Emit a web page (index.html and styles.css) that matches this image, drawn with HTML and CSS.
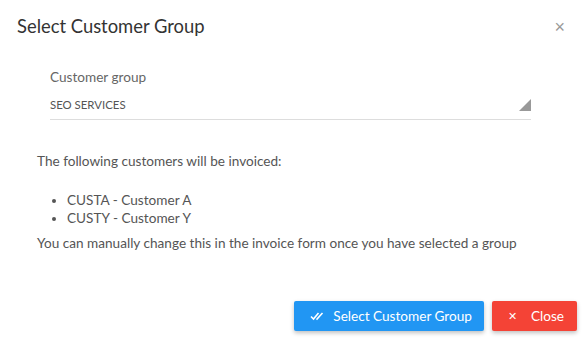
FILE: index.html
```html
<!DOCTYPE html>
<html lang="en">
<head>
    <meta charset="UTF-8">
    <title>Select Customer Group</title>
    <link rel="stylesheet" href="styles.css">
</head>
<body>
    <div class="dialog">
        <div class="dialog-header">
            <h1 class="dialog-title">Select Customer Group</h1>
            <button class="dialog-close" type="button">&times;</button>
        </div>
        <div class="dialog-body">
            <div class="field">
                <label class="field-label">Customer group</label>
                <div class="field-select">
                    <span>SEO SERVICES</span>
                    <span class="select-arrow"></span>
                </div>
            </div>
            <p class="info">The following customers will be invoiced:</p>
            <ul class="customer-list">
                <li>CUSTA - Customer A</li>
                <li>CUSTY - Customer Y</li>
            </ul>
            <p class="info note">You can manually change this in the invoice form once you have selected a group</p>
        </div>
        <div class="dialog-actions">
            <button class="btn btn-primary" type="button">
                <svg class="btn-icon" width="14" height="10" viewBox="0 0 14 10">
                    <path d="M1 5.5 L3.5 8 L8.5 2" fill="none" stroke="#fff" stroke-width="1.6"/>
                    <path d="M6.5 7.5 L7 8 L12.5 2" fill="none" stroke="#fff" stroke-width="1.6"/>
                </svg>
                Select Customer Group
            </button>
            <button class="btn btn-danger" type="button">
                <span class="btn-x">&#x2715;</span>
                Close
            </button>
        </div>
    </div>
</body>
</html>
```

FILE: styles.css
```css
body {
    margin: 0;
    background-color: #fff;
    font-family: Lato, "Open Sans", sans-serif;
    color: #555;
}
.dialog {
    width: 587px;
    height: 342px;
    display: flex;
    flex-direction: column;
}
.dialog-header {
    display: flex;
    justify-content: space-between;
    align-items: flex-start;
    padding: 14px 22px 0 17px;
}
.dialog-title {
    margin: 0;
    font-size: 18.4px;
    line-height: 24px;
    font-weight: 400;
    color: #333;
}
.dialog-close {
    border: none;
    background: none;
    padding: 0;
    margin-top: 6px;
    font-size: 18px;
    line-height: 14px;
    color: #999;
    font-weight: 300;
}
.dialog-body {
    padding: 0 56px 0 37px;
    font-size: 13.6px;
    line-height: 18px;
}
.field {
    margin: 30px 0 0 13px;
}
.field-label {
    display: block;
    color: #666;
}
.field-select {
    display: flex;
    justify-content: space-between;
    align-items: flex-end;
    height: 23px;
    margin-top: 4px;
    padding-bottom: 6px;
    border-bottom: 1px solid #ddd;
    font-size: 11.4px;
    line-height: 16px;
    color: #555;
}
.select-arrow {
    width: 0;
    height: 0;
    margin-bottom: 2px;
    border-left: 12px solid transparent;
    border-bottom: 12px solid #999;
}
.info {
    margin: 32px 0 0;
}
.customer-list {
    margin: 21px 0 0;
    padding-left: 30px;
}
.note {
    margin-top: 7px;
}
.dialog-actions {
    display: flex;
    justify-content: flex-end;
    gap: 8px;
    margin-top: auto;
    padding: 0 10px 11px 0;
}
.btn {
    display: flex;
    align-items: center;
    height: 30px;
    border: none;
    border-radius: 2px;
    color: #fff;
    font-family: Lato, "Open Sans", sans-serif;
    font-size: 13.6px;
    box-shadow: 0 2px 4px rgba(0,0,0,0.25);
}
.btn-primary {
    background-color: #2196f3;
    padding: 0 12px 0 16px;
}
.btn-danger {
    background-color: #f44336;
    padding: 0 13px 0 16px;
}
.btn-icon {
    margin-right: 9px;
}
.btn-x {
    font-size: 11px;
    margin-right: 14px;
}
```
